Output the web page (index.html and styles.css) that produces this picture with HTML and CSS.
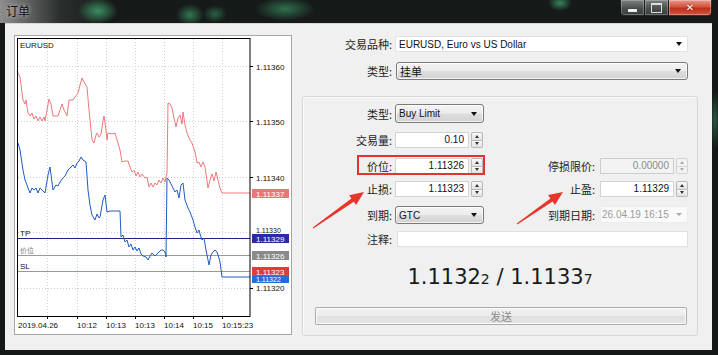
FILE: index.html
```html
<!DOCTYPE html>
<html lang="zh">
<head>
<meta charset="utf-8">
<title>订单</title>
<link rel="stylesheet" href="styles.css">
</head>
<body>
<div class="window">
  <div class="titlebar">
    <span class="title">订单</span>
    <div class="caption-btns">
      <span class="cb min"></span><span class="cb max"></span><span class="cb close">✕</span>
    </div>
  </div>
  <div class="client">
    <div class="chart-panel">
      <svg class="chart" width="276" height="298" viewBox="15 36 276 298" xmlns="http://www.w3.org/2000/svg">
        <rect x="15" y="36" width="276" height="298" fill="#fff"/>
        <g stroke="#cfcfcf" stroke-width="1" stroke-dasharray="1 2">
          <line x1="18" y1="66.5" x2="250" y2="66.5"/>
          <line x1="18" y1="121.5" x2="250" y2="121.5"/>
          <line x1="18" y1="177.5" x2="250" y2="177.5"/>
          <line x1="18" y1="232.5" x2="250" y2="232.5"/>
          <line x1="18" y1="288.5" x2="250" y2="288.5"/>
          <line x1="47.5" y1="39" x2="47.5" y2="316"/>
          <line x1="77.5" y1="39" x2="77.5" y2="316"/>
          <line x1="106.5" y1="39" x2="106.5" y2="316"/>
          <line x1="135.5" y1="39" x2="135.5" y2="316"/>
          <line x1="164.5" y1="39" x2="164.5" y2="316"/>
          <line x1="193.5" y1="39" x2="193.5" y2="316"/>
          <line x1="222.5" y1="39" x2="222.5" y2="316"/>
        </g>
        <line x1="18" y1="238.5" x2="250" y2="238.5" stroke="#23237a" stroke-width="1"/>
        <line x1="18" y1="255.5" x2="250" y2="255.5" stroke="#9a9a9a" stroke-width="1"/>
        <line x1="18" y1="271.5" x2="250" y2="271.5" stroke="#d48080" stroke-width="1"/>
        <polyline fill="none" stroke="#ec7a7a" stroke-width="1" points="17,71 20,77 23,100 25,104 26,100 28,113 30,116 32,113 34,119 36,116 38,121 40,117 42,121 44,117 45,121 49,99 51,104 53,116 58,116 62,104 64,110 67,116 69,100 73,100 75,97 78,93 80,85 82,78 84,82 87,87 89,110 92,140 94,143 96,135 97,133 99,137 101,134 103,121 104,116 106,130 107,140 108,133 112,134 115,133 118,143 120,150 122,162 125,161 128,161 130,167 132,172 134,170 136,176 138,172 140,177 142,174 145,178 147,177 149,187 151,183 153,187 155,183 157,185 159,180 161,183 163,178 165,182 167,173 168,103 170,104 172,108 174,118 176,127 178,118 180,115 182,124 183,112 185,125 187,133 190,140 192,143 195,152 197,163 199,162 201,167 203,162 205,167 208,188 210,180 212,174 214,181 216,172 218,180 220,188 222,193 250,193"/>
        <polyline fill="none" stroke="#1f5cc0" stroke-width="1" points="18,143 20,150 23,170 25,180 27,185 28,188 30,193 32,188 34,190 36,188 38,193 40,188 42,190 45,193 48,175 50,167 53,190 56,185 58,186 60,182 63,178 65,176 68,170 70,168 73,165 75,168 77,163 79,161 81,157 83,160 86,162 88,190 90,205 92,215 95,220 97,214 99,218 100,217 103,200 105,195 107,212 110,211 120,211 121,237 123,235 125,242 127,240 129,247 131,244 133,250 135,247 137,251 139,248 141,254 143,256 146,257 148,260 150,256 152,253 155,256 158,253 161,250 163,250 165,252 166,257 167,178 169,180 171,184 173,188 175,192 177,190 179,198 181,185 183,183 185,200 188,208 190,212 193,220 195,227 197,233 199,230 200,234 202,240 204,238 206,250 208,260 209,265 211,255 213,252 215,250 217,252 219,258 220,262 222,277 250,277"/>
        <rect x="17.5" y="38.5" width="232.5" height="278" fill="none" stroke="#000" stroke-width="1"/>
        <g stroke="#000" stroke-width="1">
          <line x1="250" y1="66.5" x2="253" y2="66.5"/>
          <line x1="250" y1="121.5" x2="253" y2="121.5"/>
          <line x1="250" y1="177.5" x2="253" y2="177.5"/>
          <line x1="250" y1="288.5" x2="253" y2="288.5"/>
          <line x1="47.5" y1="316" x2="47.5" y2="319"/>
          <line x1="77.5" y1="316" x2="77.5" y2="319"/>
          <line x1="106.5" y1="316" x2="106.5" y2="319"/>
          <line x1="135.5" y1="316" x2="135.5" y2="319"/>
          <line x1="164.5" y1="316" x2="164.5" y2="319"/>
          <line x1="193.5" y1="316" x2="193.5" y2="319"/>
          <line x1="222.5" y1="316" x2="222.5" y2="319"/>
        </g>
        <g class="ax">
          <text x="20" y="48">EURUSD</text>
          <text x="256" y="69.5">1.11360</text>
          <text x="256" y="124.5">1.11350</text>
          <text x="256" y="180.5">1.11340</text>
          <text x="256" y="232.5" class="small">1.11330</text>
          <text x="256" y="291">1.11320</text>
          <text x="20" y="236">TP</text>
          <text x="20" y="253" class="grey">价位</text>
          <text x="20" y="269">SL</text>
          <text x="18" y="328">2019.04.26</text>
          <text x="77" y="328">10:12</text>
          <text x="106" y="328">10:13</text>
          <text x="135" y="328">10:13</text>
          <text x="164" y="328">10:14</text>
          <text x="193" y="328">10:15</text>
          <text x="222" y="328">10:15:23</text>
        </g>
        <rect x="252" y="189" width="37" height="9" fill="#ec7676"/>
        <rect x="252" y="234" width="37" height="9" fill="#2c2ca0"/>
        <rect x="252" y="251" width="37" height="9" fill="#8a8a8a"/>
        <rect x="252" y="275" width="37" height="8" fill="#2a6ad6"/>
        <rect x="252" y="267" width="37" height="9" fill="#e03c3c"/>
        <g class="ax tag">
          <text x="256" y="196.5">1.11337</text>
          <text x="256" y="241.5">1.11329</text>
          <text x="256" y="258.5">1.11326</text>
          <text x="256" y="282" class="small">1.11322</text>
          <text x="256" y="274.5">1.11323</text>
        </g>
      </svg>
    </div>
    <div class="form">
      <div class="top-row r1">
        <span class="lab">交易品种:</span>
        <div class="combo flat"><span class="lat">EURUSD, Euro vs US Dollar</span><i class="arr"></i></div>
      </div>
      <div class="top-row r2">
        <span class="lab">类型:</span>
        <div class="combo btn"><span class="cjk">挂单</span><i class="arr"></i></div>
      </div>
      <div class="group">
        <div class="grid">
          <span class="lab h19">类型:</span>
          <div class="combo btn h19"><span class="lat">Buy Limit</span><i class="arr"></i></div>
          <span></span><span></span>

          <span class="lab">交易量:</span>
          <div class="spin"><span class="tb">0.10</span><span class="sp"><i class="up"></i><i class="dn"></i></span></div>
          <span></span><span></span>

          <span class="lab">价位:</span>
          <div class="spin"><span class="tb">1.11326</span><span class="sp"><i class="up"></i><i class="dn"></i></span></div>
          <span class="lab r">停损限价:</span>
          <div class="spin off"><span class="tb">0.00000</span><span class="sp"><i class="up"></i><i class="dn"></i></span></div>

          <span class="lab">止损:</span>
          <div class="spin"><span class="tb">1.11323</span><span class="sp"><i class="up"></i><i class="dn"></i></span></div>
          <span class="lab r">止盈:</span>
          <div class="spin"><span class="tb">1.11329</span><span class="sp"><i class="up"></i><i class="dn"></i></span></div>

          <span class="lab h18">到期:</span>
          <div class="combo btn h18"><span class="lat">GTC</span><i class="arr"></i></div>
          <span class="lab r h18">到期日期:</span>
          <div class="date"><span class="lat">26.04.19 16:15</span><i class="arr grey"></i></div>

          <span class="lab">注释:</span>
          <div class="note"></div>
        </div>
        <div class="quote">1.1132<small>2</small> / 1.1133<small>7</small></div>
        <div class="send">发送</div>
      </div>
    </div>
  </div>
  <svg class="annot" width="718" height="355" viewBox="0 0 718 355" xmlns="http://www.w3.org/2000/svg">
    <rect x="358" y="156" width="126" height="18" fill="none" stroke="#e23232" stroke-width="2"/>
    <polygon fill="#e8352c" points="312.7,227.6 351.4,198.5 349.1,195.2 364,192 356.1,205 353.8,201.7 313.3,228.4"/>
    <polygon fill="#e8352c" points="516.7,223.6 550.4,198.4 548.1,195.1 563,192 554.9,204.9 552.6,201.6 517.3,224.4"/>
  </svg>
</div>
</body>
</html>
```

FILE: styles.css
```css
* { box-sizing: border-box; }
html, body { margin: 0; padding: 0; }
body {
  width: 718px;
  height: 355px;
  overflow: hidden;
  background: #141817;
  font-family: "Noto Sans CJK SC", "Liberation Sans", sans-serif;
}
.window {
  position: relative;
  width: 718px;
  height: 355px;
  background:
    radial-gradient(ellipse 6px 30px at 715px 120px, rgba(70,160,110,.45), transparent),
    #141817;
}
.titlebar {
  height: 23px;
  display: flex;
  justify-content: space-between;
  align-items: flex-start;
  padding: 0 6px;
  background:
    radial-gradient(ellipse 20px 13px at 98px 11px, rgba(70,180,120,.75), transparent),
    radial-gradient(ellipse 14px 11px at 190px 15px, rgba(70,180,120,.6), transparent),
    radial-gradient(ellipse 12px 9px at 215px 14px, rgba(70,180,120,.45), transparent),
    radial-gradient(ellipse 30px 12px at 285px 9px, rgba(70,180,120,.55), transparent),
    radial-gradient(ellipse 12px 8px at 560px 3px, rgba(70,180,120,.7), transparent),
    linear-gradient(90deg, #8e8e8e 0, #6a6a6a 22px, #2a2f2d 60px, #161a19 110px, #151918 100%);
}
.title {
  font-size: 12px;
  line-height: 14px;
  padding-top: 4px;
  color: #111;
  text-shadow: 0 0 4px rgba(255,255,255,.8);
}
.caption-btns { display: flex; height: 16px; }
.cb {
  height: 16px;
  display: flex;
  align-items: center;
  justify-content: center;
  border: 1px solid rgba(0,0,0,.7);
  border-top: 0;
  position: relative;
}
.cb.min {
  width: 25px;
  border-radius: 0 0 0 4px;
  background: linear-gradient(#7b8280, #4a504e 55%, #3a403e);
  box-shadow: inset 0 0 0 1px rgba(255,255,255,.25);
}
.cb.min::before {
  content: "";
  width: 9px; height: 3px;
  margin-top: 5px;
  background: #f0f0f0;
  border: 1px solid #444;
}
.cb.max {
  width: 24px;
  border-left: 0;
  background: linear-gradient(#7b8280, #4a504e 55%, #3a403e);
  box-shadow: inset 0 0 0 1px rgba(255,255,255,.25);
}
.cb.max::before {
  content: "";
  width: 9px; height: 7px;
  border: 1px solid #ddd;
  border-top-width: 2px;
}
.cb.close {
  width: 43px;
  border-left: 0;
  border-radius: 0 0 4px 0;
  background: linear-gradient(#e89a8c, #d2533f 45%, #c0301c 55%, #d0543c);
  box-shadow: inset 0 0 0 1px rgba(255,255,255,.3);
  color: #fff;
  font-family: "DejaVu Sans", sans-serif;
  font-weight: bold;
  font-size: 10px;
  text-shadow: 0 0 2px #600;
}

.client {
  height: 327px;
  margin: 0 6px 0 5px;
  background: #f0f0f0;
  border-top: 1px solid #d8d8d8;
  display: flex;
  gap: 10px;
  padding: 11px 14px 0 9px;
}
.chart-panel {
  width: 278px;
  height: 300px;
  border: 1px solid #a6a6a6;
  background: #fff;
  flex: none;
}
.chart { display: block; }
.ax text {
  font-family: "Liberation Sans", Arial, sans-serif;
  font-size: 8px;
  fill: #111;
}
.ax text.small { font-size: 7px; }
.ax text.grey { fill: #808080; font-family: "Noto Sans CJK SC", sans-serif; font-size: 7px; }
.ax.tag text { fill: #fff; }

.form { width: 396px; flex: none; padding-top: 1px; }
.top-row {
  display: grid;
  grid-template-columns: 93px 1fr;
  padding-right: 10px;
}
.top-row.r1 { height: 16px; }
.top-row.r2 { height: 18px; margin-top: 10px; }
.top-row.r2 .combo { margin-left: 1px; }

.lab {
  display: flex;
  align-items: center;
  justify-content: flex-end;
  padding-right: 3px;
  height: 16px;
  font-size: 11px;
  color: #222;
  white-space: nowrap;
}
.lab.r { padding-right: 5px; }
.h19 { height: 19px; }
.h18 { height: 18px; }
.top-row .lab { height: 100%; }

.lat { font-family: "Liberation Sans", Arial, sans-serif; font-size: 10px; }
.cjk { font-size: 11px; }

.combo {
  display: flex;
  align-items: center;
  justify-content: space-between;
  padding: 0 4px 0 3px;
  color: #111;
}
.combo.flat {
  background: #fff;
  border: 1px solid #e2e2e2;
  padding-right: 5px;
}
.combo.btn {
  border: 1px solid #7a7a7a;
  border-radius: 3px;
  background: linear-gradient(#f4f4f4, #ececec 48%, #dedede 52%, #d2d2d2);
  box-shadow: inset 0 0 0 1px rgba(255,255,255,.7);
  padding-right: 6px;
}
.arr {
  width: 0; height: 0;
  border-left: 3.5px solid transparent;
  border-right: 3.5px solid transparent;
  border-top: 4px solid #111;
}
.arr.grey { border-top-color: #a8a8a8; border-top-width: 3px; }

.group {
  margin-top: 16px;
  height: 240px;
  border: 1px solid #d6d6d6;
  border-radius: 3px;
  padding: 7px 10px 10px 0;
  box-shadow: inset 1px 1px 0 #fbfbfb;
}
.grid {
  display: grid;
  grid-template-columns: 92px 89px 116px 88px;
  grid-template-rows: 28px 26px 23px 25px 25px 16px;
  align-items: start;
}
.spin { display: flex; gap: 2px; height: 16px; }
.spin .tb {
  width: 74px;
  height: 16px;
  background: #fff;
  border: 1px solid #d4d4d4;
  text-align: right;
  padding-right: 4px;
  font-family: "Liberation Sans", Arial, sans-serif;
  font-size: 10px;
  line-height: 14px;
  color: #111;
}
.spin .sp {
  width: 12px;
  height: 16px;
  display: flex;
  flex-direction: column;
  gap: 0;
}
.sp i {
  flex: 1;
  border: 1px solid #b8b8b8;
  background: linear-gradient(#fafafa, #e2e2e2);
  display: flex;
  align-items: center;
  justify-content: center;
}
.sp i.up { border-radius: 2px 2px 0 0; }
.sp i.dn { border-radius: 0 0 2px 2px; border-top: 0; }
.sp i::before {
  content: "";
  width: 0; height: 0;
  border-left: 2.5px solid transparent;
  border-right: 2.5px solid transparent;
}
.sp i.up::before { border-bottom: 3px solid #333; }
.sp i.dn::before { border-top: 3px solid #333; }
.spin.off .tb { background: #f3f3f3; border-color: #cdcdcd; color: #8c8c8c; }
.spin.off .sp i { border-color: #d2d2d2; background: #f3f3f3; }
.spin.off .sp i.up::before { border-bottom-color: #aaa; }
.spin.off .sp i.dn::before { border-top-color: #aaa; }

.date {
  height: 17px;
  background: #fafafa;
  border: 1px solid #ececec;
  display: flex;
  align-items: center;
  justify-content: space-between;
  padding: 0 5px 0 1px;
  color: #9a9a9a;
}
.note {
  grid-column: 2 / 5;
  height: 16px;
  margin-left: 2px;
  background: #fff;
  border: 1px solid #e0e0e0;
}
.quote {
  margin-top: 18px;
  height: 24px;
  line-height: 24px;
  text-align: center;
  font-family: "DejaVu Sans", Verdana, sans-serif;
  font-size: 21px;
  color: #1a1a1a;
  padding-left: 10px;
}
.quote small { font-size: 14px; }
.send {
  margin: 18px 0 0 12px;
  height: 18px;
  border: 1px solid #acacac;
  border-radius: 2px;
  background: linear-gradient(#f3f3f3, #ebebeb 50%, #e0e0e0 50%, #e6e6e6);
  box-shadow: inset 0 0 0 1px #fafafa;
  text-align: center;
  font-size: 11px;
  line-height: 16px;
  color: #8a8a8a;
}
.annot {
  position: absolute;
  left: 0;
  top: 0;
  pointer-events: none;
}
```
